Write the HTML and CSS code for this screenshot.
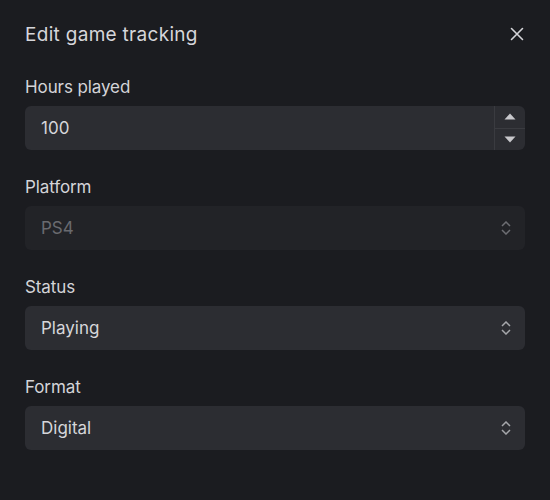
FILE: index.html
```html
<!DOCTYPE html>
<html>
<head>
<meta charset="utf-8">
<link rel="stylesheet" href="styles.css">
</head>
<body>
<div class="dialog">
  <div class="header">
    <h1 class="title">Edit game tracking</h1>
    <button class="close" aria-label="Close">
      <svg width="14" height="14" viewBox="0 0 14 14"><path d="M1.5 1.5L12.5 12.5M12.5 1.5L1.5 12.5" stroke="#d4d4d8" stroke-width="1.6" stroke-linecap="round"/></svg>
    </button>
  </div>
  <div class="field">
    <label class="label">Hours played</label>
    <div class="box">
      <span class="value">100</span>
      <div class="spin">
        <div class="spin-btn"><svg width="12" height="7" viewBox="0 0 12 7"><path d="M6 0.5L11.5 6.5H0.5Z" fill="#c8c8cc"/></svg></div>
        <div class="spin-btn"><svg width="12" height="7" viewBox="0 0 12 7"><path d="M0.5 0.5H11.5L6 6.5Z" fill="#c8c8cc"/></svg></div>
      </div>
    </div>
  </div>
  <div class="field">
    <label class="label">Platform</label>
    <div class="box disabled">
      <span class="value">PS4</span>
      <svg class="chev" width="10" height="14" viewBox="0 0 10 14"><path d="M1 5L5 1L9 5M1 9L5 13L9 9" fill="none" stroke="#6d6e73" stroke-width="1.5"/></svg>
    </div>
  </div>
  <div class="field">
    <label class="label">Status</label>
    <div class="box">
      <span class="value">Playing</span>
      <svg class="chev" width="10" height="14" viewBox="0 0 10 14"><path d="M1 5L5 1L9 5M1 9L5 13L9 9" fill="none" stroke="#a6a7ab" stroke-width="1.5"/></svg>
    </div>
  </div>
  <div class="field">
    <label class="label">Format</label>
    <div class="box">
      <span class="value">Digital</span>
      <svg class="chev" width="10" height="14" viewBox="0 0 10 14"><path d="M1 5L5 1L9 5M1 9L5 13L9 9" fill="none" stroke="#a6a7ab" stroke-width="1.5"/></svg>
    </div>
  </div>
</div>
</body>
</html>
```
FILE: styles.css
```css
* { box-sizing: border-box; }
html, body {
  margin: 0;
  padding: 0;
  background: #1b1c20;
  width: 550px;
  height: 500px;
  overflow: hidden;
}
body {
  font-family: "Inter", "DejaVu Sans", sans-serif;
  color: #d4d4d8;
}
.dialog {
  padding: 22px 25px 0 25px;
  display: flex;
  flex-direction: column;
}
.header {
  display: flex;
  align-items: center;
  justify-content: space-between;
  height: 24px;
  margin-bottom: 31px;
}
.title {
  margin: 0;
  font-size: 19px;
  font-weight: 400;
  color: #d6d6da;
  letter-spacing: 0.3px;
}
.close {
  background: none;
  border: none;
  padding: 0;
  margin-right: 1px;
  width: 14px;
  height: 14px;
  display: flex;
}
.field {
  display: flex;
  flex-direction: column;
  margin-bottom: 27px;
}
.label {
  font-size: 17px;
  line-height: 20px;
  color: #d4d4d8;
  margin-bottom: 9px;
  letter-spacing: -0.1px;
}
.box {
  height: 44px;
  border-radius: 6px;
  background: #2c2d32;
  display: flex;
  align-items: center;
  padding-left: 16px;
  position: relative;
}
.box.disabled { background: #222327; }
.value {
  flex: 1;
  font-size: 17px;
  color: #d6d6da;
}
.box.disabled .value { color: #696a6f; }
.chev { margin-right: 14px; }
.spin {
  width: 31px;
  height: 44px;
  border-left: 1px solid #3a3b40;
  display: flex;
  flex-direction: column;
}
.spin-btn {
  flex: 1;
  display: flex;
  align-items: center;
  justify-content: center;
}
.spin-btn:first-child { border-bottom: 1px solid #3a3b40; }
```
